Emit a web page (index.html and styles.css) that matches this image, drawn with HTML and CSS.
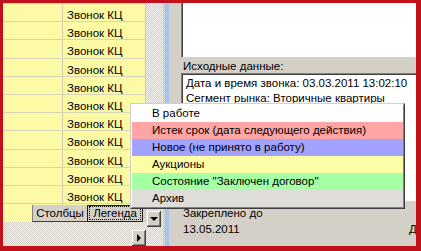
FILE: index.html
```html
<!DOCTYPE html>
<html lang="ru">
<head>
<meta charset="utf-8">
<title>Легенда</title>
<link rel="stylesheet" href="styles.css">
</head>
<body>
<div class="frame">
  <div class="app">
    <div class="table">
      <div class="row"><div class="c1"></div><div class="c2">Звонок КЦ</div></div>
      <div class="row"><div class="c1"></div><div class="c2">Звонок КЦ</div></div>
      <div class="row"><div class="c1"></div><div class="c2">Звонок КЦ</div></div>
      <div class="row"><div class="c1"></div><div class="c2">Звонок КЦ</div></div>
      <div class="row"><div class="c1"></div><div class="c2">Звонок КЦ</div></div>
      <div class="row"><div class="c1"></div><div class="c2">Звонок КЦ</div></div>
      <div class="row"><div class="c1"></div><div class="c2">Звонок КЦ</div></div>
      <div class="row"><div class="c1"></div><div class="c2">Звонок КЦ</div></div>
      <div class="row"><div class="c1"></div><div class="c2">Звонок КЦ</div></div>
      <div class="row"><div class="c1"></div><div class="c2">Звонок КЦ</div></div>
      <div class="row"><div class="c1"></div><div class="c2">Звонок КЦ</div></div>
      <div class="row"><div class="c1"></div><div class="c2"></div></div>
    </div>
    <div class="vscroll"><div class="btn btn-down"><i class="tri-down"></i></div></div>
    <div class="tabs">
      <div class="tab-fill"></div>
      <div class="tab">Столбцы</div>
      <div class="tab active"><span>Легенда</span></div>
      <div class="tab-rest"></div>
    </div>
    <div class="hscroll"><div class="btn btn-right"><i class="tri-right"></i></div></div>
    <div class="corner"></div>
    <div class="splitter"></div>
    <div class="pane">
      <div class="memo memo-top"></div>
      <div class="label">Исходные данные:</div>
      <div class="memo memo-data">
        <div>Дата и время звонка: 03.03.2011 13:02:10</div>
        <div>Сегмент рынка: Вторичные квартиры</div>
      </div>
      <div class="bottom">
        <div class="fixed">
          <div>Закреплено до</div>
          <div>13.05.2011</div>
        </div>
        <div class="cut">Д</div>
      </div>
    </div>
  </div>
  <div class="menu">
    <div class="menu-in">
      <div class="item white">В работе</div>
      <div class="item pink">Истек срок (дата следующего действия)</div>
      <div class="item blue">Новое (не принято в работу)</div>
      <div class="item yellow">Аукционы</div>
      <div class="item green">Состояние "Заключен договор"</div>
      <div class="item gray">Архив</div>
    </div>
  </div>
</div>
</body>
</html>
```

FILE: styles.css
```css
* { box-sizing: border-box; }
html, body { margin: 0; padding: 0; }
body {
  width: 421px;
  height: 251px;
  background: #fff;
  font-family: "Liberation Sans", Arial, sans-serif;
  font-size: 11.5px;
  color: #000;
  overflow: hidden;
}
.frame {
  position: relative;
  width: 421px;
  height: 251px;
  border-style: solid;
  border-color: #c3111b;
  border-width: 3px 5px 5px 3px;
  overflow: hidden;
}
.app {
  display: grid;
  grid-template-columns: 143px 17px 7px minmax(0, 1fr);
  grid-template-rows: 202px 22px 19px;
  height: 100%;
  background: #d4d0c8;
}
.table {
  grid-column: 1;
  grid-row: 1;
  background: #fdfaa6;
  overflow: hidden;
}
.row {
  display: grid;
  grid-template-columns: 60px 1fr;
  height: 18.2px;
  border-top: 1px solid #d8d5b6;
}
.row > div {
  border-right: 1px solid #cfcbb0;
  padding: 4px 0 0 4px;
  line-height: 14px;
  white-space: nowrap;
  overflow: hidden;
}
.vscroll {
  grid-column: 2;
  grid-row: 1 / 3;
  display: flex;
  flex-direction: column;
  justify-content: flex-end;
  background: repeating-conic-gradient(#f2f1ee 0 25%, #d4d0c8 0 50%) 0 0 / 2px 2px;
}
.btn {
  background: #d4d0c8;
  box-shadow: inset -1px -1px #404040, inset 1px 1px #fff, inset -2px -2px #808080;
  display: flex;
  align-items: center;
  justify-content: center;
}
.btn-down {
  width: 14px;
  height: 16px;
  margin-left: 1px;
}
.tri-down {
  width: 0;
  height: 0;
  border-left: 4px solid transparent;
  border-right: 4px solid transparent;
  border-top: 4px solid #000;
}
.tri-right {
  width: 0;
  height: 0;
  border-top: 4px solid transparent;
  border-bottom: 4px solid transparent;
  border-left: 4px solid #000;
}
.tabs {
  grid-column: 1;
  grid-row: 2;
  display: flex;
  align-items: flex-start;
  background: repeating-conic-gradient(#f2f1ee 0 25%, #d4d0c8 0 50%) 0 0 / 2px 2px;
}
.tab-fill {
  width: 29px;
  height: 17px;
  background: #fdfaa6;
}
.tab {
  width: 55px;
  height: 17px;
  background: #d4d0c8;
  border-left: 1px solid #808080;
  border-bottom: 1px solid #404040;
  text-align: center;
  line-height: 16px;
  white-space: nowrap;
}
.tab.active {
  width: 56px;
  border: 1px solid #202020;
  padding: 1px 2px;
  line-height: 12px;
}
.tab.active span {
  display: block;
  outline: 1px dotted #000;
  outline-offset: 0;
}
.tab-rest {
  flex: 1;
  height: 17px;
  background: #d4d0c8;
}
.hscroll {
  grid-column: 1;
  grid-row: 3;
  display: flex;
  justify-content: flex-end;
  align-items: flex-start;
  background: repeating-conic-gradient(#f2f1ee 0 25%, #d4d0c8 0 50%) 0 0 / 2px 2px;
}
.btn-right {
  width: 14px;
  height: 16px;
  margin-top: 3px;
}
.corner {
  grid-column: 2;
  grid-row: 3;
  background: repeating-conic-gradient(#f2f1ee 0 25%, #d4d0c8 0 50%) 0 0 / 2px 2px;
}
.splitter {
  grid-column: 3;
  grid-row: 1 / 4;
  background: linear-gradient(to right, #d4d0c8 2px, #a3c6ee 2px, #a3c6ee 6px, #d4d0c8 6px);
}
.pane {
  grid-column: 4;
  grid-row: 1 / 4;
  min-width: 0;
  padding-left: 11px;
  display: flex;
  flex-direction: column;
}
.memo {
  background: #fff;
  border-left: 1px solid #808080;
  box-shadow: inset 1px 0 #404040;
}
.memo-top {
  height: 54px;
  flex: none;
}
.label {
  height: 16px;
  padding: 2px 0 0 2px;
  line-height: 14px;
  white-space: nowrap;
}
.memo-data {
  height: 128px;
  flex: none;
  border-top: 1px solid #808080;
  box-shadow: inset 1px 1px #404040;
  padding: 2px 0 0 4px;
  line-height: 15px;
  white-space: nowrap;
}
.bottom {
  display: flex;
  padding: 4px 0 0 2px;
  line-height: 16px;
  white-space: nowrap;
}
.fixed {
  width: 226px;
  flex: none;
}
.cut {
  padding-top: 16px;
}
.menu {
  position: absolute;
  left: 127px;
  top: 100px;
  width: 275px;
  border: 1px solid;
  border-color: #d4d0c8 #404040 #404040 #d4d0c8;
}
.menu-in {
  border: 1px solid;
  border-color: #fff #808080 #808080 #fff;
}
.item {
  height: 17px;
  line-height: 17px;
  padding-left: 20px;
  white-space: nowrap;
}
.white { background: #fff; }
.pink { background: #ffa5a5; }
.blue { background: #a2a2ff; }
.yellow { background: #ffffa5; }
.green { background: #a5ffa5; }
.gray { background: #deddd9; }
```
